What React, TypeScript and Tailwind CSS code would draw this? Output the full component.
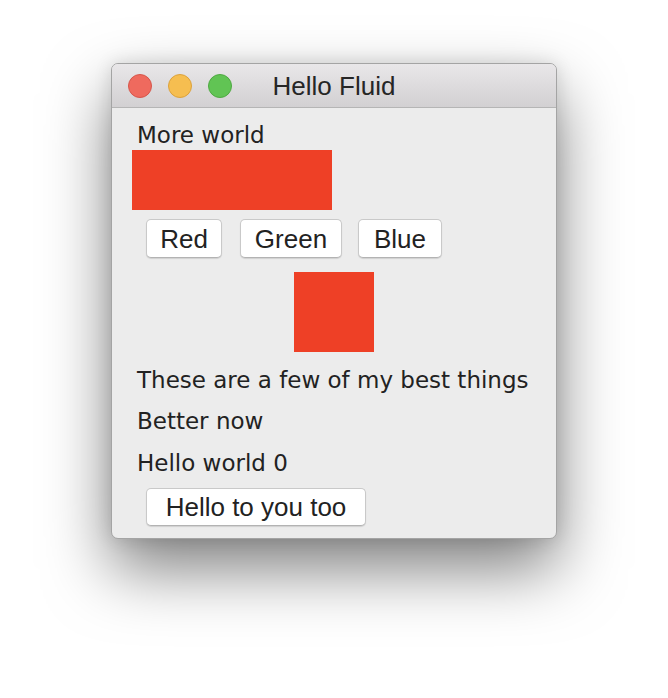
import React from 'react';

const Light: React.FC<{ className: string }> = ({ className }) => (
  <span className={`block w-[24px] h-[24px] rounded-full border ${className}`} />
);

const MacButton: React.FC<{ label: string; className?: string }> = ({ label, className = '' }) => (
  <button
    className={`flex items-center justify-center bg-white border border-[#c9c9c9] border-b-[#b3b3b3] rounded-[5px] shadow-[0_1px_1px_rgba(0,0,0,0.12)] text-[26px] leading-none text-[#222] font-['Liberation_Sans',Arial,sans-serif] ${className}`}
  >
    {label}
  </button>
);

export default function App() {
  return (
    <div className="min-h-[698px] bg-white flex pl-[111px] pt-[63px] font-['DejaVu_Sans',sans-serif]">
      <div className="w-[446px] h-[476px] rounded-[7px] overflow-hidden border border-[#a4a4a4] bg-[#ececec] shadow-[0_30px_65px_rgba(0,0,0,0.5),0_0_18px_rgba(0,0,0,0.12)] flex flex-col">
        <div className="relative h-[44px] shrink-0 border-b border-[#b5b5b5] bg-gradient-to-b from-[#e9e7e9] to-[#d2d0d2] flex items-center">
          <div className="absolute left-[16px] top-[10px] flex gap-[16px]">
            <Light className="bg-[#ef6a5e] border-[#d6564b]" />
            <Light className="bg-[#f6be50] border-[#dca23c]" />
            <Light className="bg-[#61c454] border-[#4fa942]" />
          </div>
          <div className="w-full text-center text-[26px] leading-none text-[#262626] font-['Liberation_Sans',Arial,sans-serif]">
            Hello Fluid
          </div>
        </div>

        <div className="flex flex-col pt-[13px] text-[23px] leading-[28px] text-[#222]">
          <div className="pl-[25px]">More world</div>
          <div className="ml-[20px] mt-px w-[200px] h-[60px] bg-[#ee4026]" />
          <div className="flex mt-[9px] ml-[34px]">
            <MacButton label="Red" className="w-[76px] h-[39px]" />
            <MacButton label="Green" className="w-[102px] h-[39px] ml-[18px]" />
            <MacButton label="Blue" className="w-[84px] h-[39px] ml-[16px]" />
          </div>
          <div className="flex justify-center mt-[14px]">
            <div className="w-[80px] h-[80px] bg-[#ee4026]" />
          </div>
          <div className="pl-[25px] mt-[14px]">These are a few of my best things</div>
          <div className="pl-[25px] mt-[13px]">Better now</div>
          <div className="pl-[25px] mt-[14px]">Hello world 0</div>
          <div className="ml-[34px] mt-[11px]">
            <MacButton label="Hello to you too" className="w-[220px] h-[38px]" />
          </div>
        </div>
      </div>
    </div>
  );
}
